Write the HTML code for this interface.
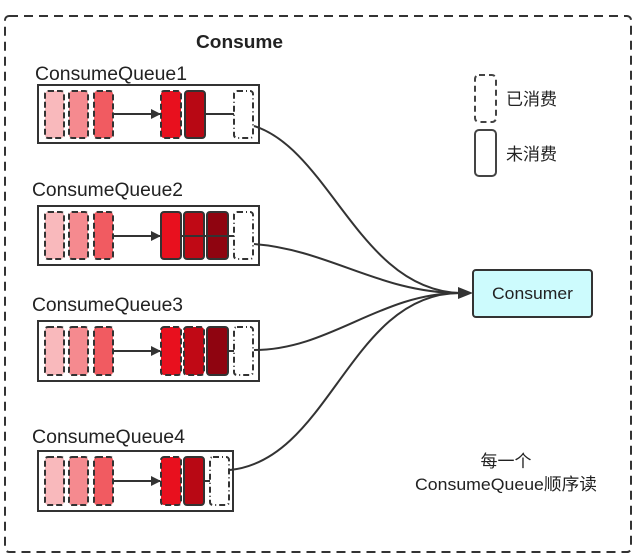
<!DOCTYPE html>
<html><head><meta charset="utf-8"><style>
html,body{margin:0;padding:0;background:#fff;width:640px;height:560px;overflow:hidden}
svg{display:block}
text{font-family:"Liberation Sans","Noto Sans CJK SC",sans-serif;fill:#222}
</style></head><body>
<svg width="640" height="560" viewBox="0 0 640 560">
<defs>
<marker id="ar" markerWidth="10" markerHeight="10" refX="9" refY="5" orient="auto" markerUnits="userSpaceOnUse">
<path d="M0,0 L10,5 L0,10 Z" fill="#333"/></marker>
</defs>
<rect x="5" y="16" width="626" height="536" rx="4" fill="none" stroke="#333" stroke-width="2" stroke-dasharray="9,6"/>
<text x="196" y="48" font-size="18" font-weight="bold" textLength="87" lengthAdjust="spacingAndGlyphs">Consume</text>

<!-- Queue 1 -->
<text x="35" y="80" font-size="19" textLength="152" lengthAdjust="spacingAndGlyphs">ConsumeQueue1</text>
<rect x="38" y="85" width="221" height="58" fill="none" stroke="#333" stroke-width="2"/>
<g stroke="#333" stroke-width="2" stroke-dasharray="6,3">
<rect x="45" y="91" width="19" height="47" rx="3" fill="#f9b9bc"/>
<rect x="69" y="91" width="19" height="47" rx="3" fill="#f58a8f"/>
<rect x="94" y="91" width="19" height="47" rx="3" fill="#f15b61"/>
<rect x="161" y="91" width="20" height="47" rx="3" fill="#e8101e"/>
</g>
<rect x="185" y="91" width="20" height="47" rx="3" fill="#b80814" stroke="#333" stroke-width="2"/>
<rect x="234" y="91" width="19" height="47" rx="3" fill="#fff" stroke="#333" stroke-width="2" stroke-dasharray="6,3,1,3"/>
<line x1="113" y1="114" x2="160" y2="114" stroke="#333" stroke-width="2" marker-end="url(#ar)"/>
<line x1="205" y1="114" x2="234" y2="114" stroke="#333" stroke-width="2"/>

<!-- Queue 2 -->
<text x="32" y="196" font-size="19" textLength="151" lengthAdjust="spacingAndGlyphs">ConsumeQueue2</text>
<rect x="38" y="206" width="221" height="59" fill="none" stroke="#333" stroke-width="2"/>
<g stroke="#333" stroke-width="2" stroke-dasharray="6,3">
<rect x="45" y="212" width="19" height="47" rx="3" fill="#f9b9bc"/>
<rect x="69" y="212" width="19" height="47" rx="3" fill="#f58a8f"/>
<rect x="94" y="212" width="19" height="47" rx="3" fill="#f15b61"/>
</g>
<rect x="161" y="212" width="20" height="47" rx="3" fill="#e8101e" stroke="#333" stroke-width="2"/>
<rect x="184" y="212" width="20" height="47" rx="3" fill="#c00915" stroke="#333" stroke-width="2"/>
<rect x="207" y="212" width="21" height="47" rx="3" fill="#8f0410" stroke="#333" stroke-width="2"/>
<rect x="234" y="212" width="19" height="47" rx="3" fill="#fff" stroke="#333" stroke-width="2" stroke-dasharray="6,3,1,3"/>
<line x1="113" y1="236" x2="160" y2="236" stroke="#333" stroke-width="2" marker-end="url(#ar)"/>
<line x1="181" y1="236" x2="234" y2="236" stroke="#333" stroke-width="2"/>

<!-- Queue 3 -->
<text x="32" y="311" font-size="19" textLength="151" lengthAdjust="spacingAndGlyphs">ConsumeQueue3</text>
<rect x="38" y="321" width="221" height="60" fill="none" stroke="#333" stroke-width="2"/>
<g stroke="#333" stroke-width="2" stroke-dasharray="6,3">
<rect x="45" y="327" width="19" height="48" rx="3" fill="#f9b9bc"/>
<rect x="69" y="327" width="19" height="48" rx="3" fill="#f58a8f"/>
<rect x="94" y="327" width="19" height="48" rx="3" fill="#f15b61"/>
<rect x="161" y="327" width="20" height="48" rx="3" fill="#e8101e"/>
<rect x="184" y="327" width="20" height="48" rx="3" fill="#c00915"/>
</g>
<rect x="207" y="327" width="21" height="48" rx="3" fill="#8f0410" stroke="#333" stroke-width="2"/>
<rect x="234" y="327" width="19" height="48" rx="3" fill="#fff" stroke="#333" stroke-width="2" stroke-dasharray="6,3,1,3"/>
<line x1="113" y1="351" x2="160" y2="351" stroke="#333" stroke-width="2" marker-end="url(#ar)"/>
<line x1="228" y1="351" x2="234" y2="351" stroke="#333" stroke-width="2"/>

<!-- Queue 4 -->
<text x="32" y="443" font-size="19" textLength="153" lengthAdjust="spacingAndGlyphs">ConsumeQueue4</text>
<rect x="38" y="451" width="195" height="60" fill="none" stroke="#333" stroke-width="2"/>
<g stroke="#333" stroke-width="2" stroke-dasharray="6,3">
<rect x="45" y="457" width="19" height="48" rx="3" fill="#f9b9bc"/>
<rect x="69" y="457" width="19" height="48" rx="3" fill="#f58a8f"/>
<rect x="94" y="457" width="19" height="48" rx="3" fill="#f15b61"/>
<rect x="161" y="457" width="20" height="48" rx="3" fill="#e8101e"/>
</g>
<rect x="184" y="457" width="20" height="48" rx="3" fill="#b80814" stroke="#333" stroke-width="2"/>
<rect x="210" y="457" width="19" height="48" rx="3" fill="#fff" stroke="#333" stroke-width="2" stroke-dasharray="6,3,1,3"/>
<line x1="113" y1="481" x2="160" y2="481" stroke="#333" stroke-width="2" marker-end="url(#ar)"/>
<line x1="204" y1="481" x2="210" y2="481" stroke="#333" stroke-width="2"/>

<!-- curves -->
<g fill="none" stroke="#333" stroke-width="2">
<path d="M254,126 C330,150 360,290 460,293"/>
<path d="M254,244 C330,250 380,293 460,293"/>
<path d="M254,350 C330,350 380,293 460,293"/>
<path d="M230,470 C330,460 350,293 460,293"/>
</g>
<path d="M458,287 L473,293 L458,299 Z" fill="#333"/>

<!-- Consumer -->
<rect x="473" y="270" width="119" height="47" rx="3" fill="#cdfbfd" stroke="#333" stroke-width="2"/>
<text x="532.5" y="299" font-size="17" text-anchor="middle" textLength="81" lengthAdjust="spacingAndGlyphs">Consumer</text>

<!-- Legend -->
<rect x="475" y="75" width="21" height="47" rx="4" fill="#fff" stroke="#444" stroke-width="2" stroke-dasharray="6,4"/>
<text x="506" y="105" font-size="17">已消费</text>
<rect x="475" y="130" width="21" height="46" rx="4" fill="#fff" stroke="#444" stroke-width="2"/>
<text x="506" y="160" font-size="17">未消费</text>

<text x="506" y="467" font-size="17" text-anchor="middle">每一个</text>
<text x="506" y="490" font-size="17" text-anchor="middle" textLength="182" lengthAdjust="spacingAndGlyphs">ConsumeQueue顺序读</text>
</svg>
</body></html>
